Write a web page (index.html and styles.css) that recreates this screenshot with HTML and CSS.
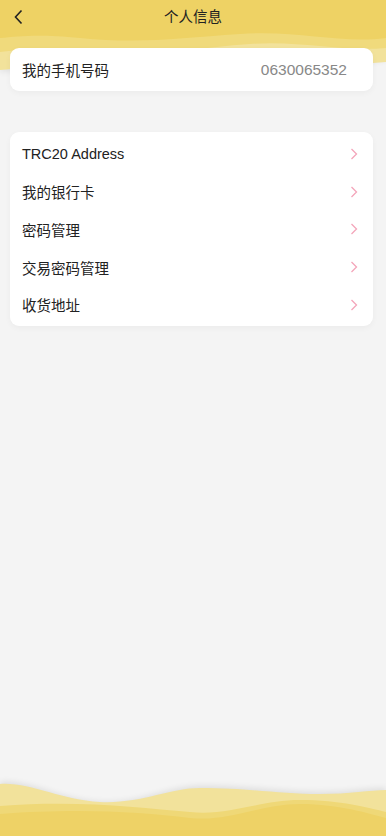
FILE: index.html
```html
<!DOCTYPE html>
<html lang="zh">
<head>
<meta charset="utf-8">
<link rel="stylesheet" href="styles.css">
</head>
<body>
<div class="page">
  <svg class="wave-top" width="386" height="80" viewBox="0 0 386 80" preserveAspectRatio="none">
    <defs>
      <filter id="sh" x="-10%" y="-30%" width="120%" height="160%">
        <feGaussianBlur stdDeviation="3"/>
      </filter>
    </defs>
    <path d="M0 0 H386 V60 C330 70 290 54 240 58 C180 62 120 78 60 70 C30 66 10 72 0 72 Z" fill="#000" opacity="0.08" filter="url(#sh)"/>
    <path d="M0 0 H386 V62 C330 68 290 52 240 56 C180 60 120 74 60 68 C30 65 10 70 0 70 Z" fill="#f2e29b"/>
    <path d="M0 0 H386 V48 C340 52 300 40 250 44 C190 48 140 60 80 52 C40 47 20 50 0 52 Z" fill="#f0da7c"/>
    <path d="M0 0 H386 V38 C340 44 300 30 240 34 C180 38 140 44 80 38 C40 34 20 36 0 38 Z" fill="#eed264"/>
  </svg>
  <header class="topbar">
    <button class="back" aria-label="back">
      <svg width="12" height="16" viewBox="0 0 12 16"><path d="M8.5 1.5 L2.5 8 L8.5 14.5" fill="none" stroke="#222" stroke-width="1.6"/></svg>
    </button>
    <h1 class="title">个人信息</h1>
  </header>

  <main class="content">
    <section class="card phone">
      <span class="label">我的手机号码</span>
      <span class="value">0630065352</span>
    </section>

    <section class="card list">
      <div class="row"><span class="label">TRC20 Address</span><svg class="chev" width="8" height="12" viewBox="0 0 8 12"><path d="M1.5 1 L6.5 6 L1.5 11" fill="none" stroke="#f4a5ba" stroke-width="1.3"/></svg></div>
      <div class="row"><span class="label">我的银行卡</span><svg class="chev" width="8" height="12" viewBox="0 0 8 12"><path d="M1.5 1 L6.5 6 L1.5 11" fill="none" stroke="#f4a5ba" stroke-width="1.3"/></svg></div>
      <div class="row"><span class="label">密码管理</span><svg class="chev" width="8" height="12" viewBox="0 0 8 12"><path d="M1.5 1 L6.5 6 L1.5 11" fill="none" stroke="#f4a5ba" stroke-width="1.3"/></svg></div>
      <div class="row"><span class="label">交易密码管理</span><svg class="chev" width="8" height="12" viewBox="0 0 8 12"><path d="M1.5 1 L6.5 6 L1.5 11" fill="none" stroke="#f4a5ba" stroke-width="1.3"/></svg></div>
      <div class="row"><span class="label">收货地址</span><svg class="chev" width="8" height="12" viewBox="0 0 8 12"><path d="M1.5 1 L6.5 6 L1.5 11" fill="none" stroke="#f4a5ba" stroke-width="1.3"/></svg></div>
    </section>
  </main>

  <svg class="wave-bottom" width="386" height="66" viewBox="0 0 386 66" preserveAspectRatio="none">
    <defs>
      <filter id="sh2" x="-10%" y="-40%" width="120%" height="180%">
        <feGaussianBlur stdDeviation="3"/>
      </filter>
    </defs>
    <path d="M0 12 C30 10 60 30 100 32 C140 34 170 16 200 16 C250 16 280 22 320 22 C350 22 370 18 386 18 V66 H0 Z" fill="#000" opacity="0.09" filter="url(#sh2)"/>
    <path d="M0 14 C30 12 60 30 100 32 C140 34 170 18 200 18 C250 18 280 24 320 24 C350 24 370 20 386 20 V66 H0 Z" fill="#f2e29b"/>
    <path d="M0 36 C80 30 140 38 190 42 C230 46 260 30 300 30 C340 30 370 38 386 42 V66 H0 Z" fill="#efd877"/>
    <path d="M0 44 C80 38 140 42 190 48 C230 52 260 34 300 34 C340 34 370 44 386 48 V66 H0 Z" fill="#eed266"/>
  </svg>
</div>
</body>
</html>
```

FILE: styles.css
```css
* { box-sizing: border-box; }
html, body { margin: 0; padding: 0; }
body {
  background: #f4f4f4;
  font-family: "Noto Sans CJK SC", "Liberation Sans", sans-serif;
  color: #222;
}
.page {
  position: relative;
  width: 386px;
  height: 836px;
  overflow: hidden;
  background: #f4f4f4;
}
.wave-top {
  position: absolute;
  left: 0;
  top: 0;
  display: block;
}
.wave-bottom {
  position: absolute;
  left: 0;
  bottom: 0;
  display: block;
}
.topbar {
  position: relative;
  height: 34px;
  display: flex;
  align-items: center;
  justify-content: center;
}
.back {
  position: absolute;
  left: 12px;
  top: 9px;
  width: 14px;
  height: 16px;
  padding: 0;
  border: 0;
  background: none;
  display: flex;
  align-items: center;
  justify-content: center;
}
.title {
  margin: 0;
  font-size: 14.5px;
  font-weight: 400;
  color: #222;
  line-height: 1;
  padding-bottom: 2px;
}
.content {
  position: relative;
  padding: 14px 13px 0 10px;
  display: flex;
  flex-direction: column;
  gap: 41px;
}
.card {
  background: #fff;
  border-radius: 9px;
  box-shadow: 0 2px 6px rgba(0,0,0,0.04);
}
.phone {
  height: 43px;
  display: flex;
  align-items: center;
  justify-content: space-between;
  padding: 0 26px 0 12px;
}
.label {
  font-size: 14.5px;
  color: #222;
}
.value {
  font-family: "Liberation Sans", sans-serif;
  font-size: 15.5px;
  color: #888;
}
.list {
  padding: 3px 0 2px;
}
.row {
  height: 37.75px;
  display: flex;
  align-items: center;
  justify-content: space-between;
  padding: 0 15px 0 12px;
}
.row .label:first-child {
  font-family: "Liberation Sans", "Noto Sans CJK SC", sans-serif;
}
.chev { display: block; }
```
